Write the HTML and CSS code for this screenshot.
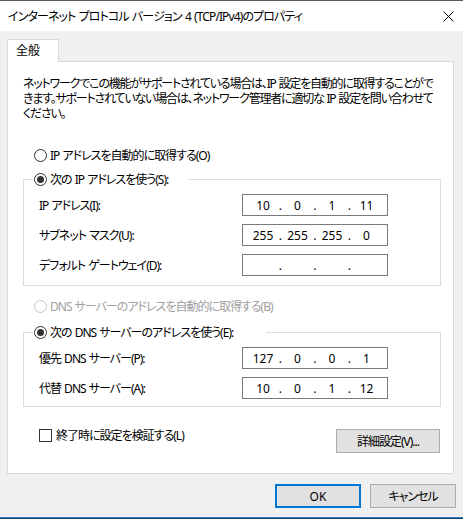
FILE: index.html
```html
<!DOCTYPE html>
<html lang="ja">
<head>
<meta charset="utf-8">
<title>TCP/IPv4 プロパティ</title>
<link rel="stylesheet" href="styles.css">
</head>
<body>
<div class="window">
  <div class="titlebar">
    <span class="title">インターネット プロトコル バージョン 4 (TCP/IPv4)のプロパティ</span>
    <svg class="close" width="11" height="11" viewBox="0 0 11 11"><path d="M0.5 0.5 L10.5 10.5 M10.5 0.5 L0.5 10.5" stroke="#000" stroke-width="1" fill="none"/></svg>
  </div>
  <div class="client">
    <div class="tabs"><div class="tab">全般</div></div>
    <div class="panel">
      <p class="desc">ネットワークでこの機能がサポートされている場合は、IP 設定を自動的に取得することがで<br>きます。サポートされていない場合は、ネットワーク管理者に適切な IP 設定を問い合わせて<br>ください。</p>

      <div class="radio-row first">
        <svg class="radio" width="13" height="13" viewBox="0 0 13 13"><circle cx="6.5" cy="6.5" r="6" fill="#fff" stroke="#333"/></svg>
        <span>IP アドレスを自動的に取得する(O)</span>
      </div>

      <fieldset class="group ip-group">
        <legend class="radio-row legend-ip">
          <svg class="radio" width="13" height="13" viewBox="0 0 13 13"><circle cx="6.5" cy="6.5" r="6" fill="#fff" stroke="#333"/><circle cx="6.5" cy="6.5" r="3.5" fill="#333"/></svg>
          <span>次の IP アドレスを使う(S):</span>
        </legend>
        <div class="field-row">
          <span class="field-label">IP アドレス(I):</span>
          <div class="ipbox"><span class="oct">10</span><span class="dot">.</span><span class="oct">0</span><span class="dot">.</span><span class="oct">1</span><span class="dot">.</span><span class="oct">11</span></div>
        </div>
        <div class="field-row">
          <span class="field-label">サブネット マスク(U):</span>
          <div class="ipbox"><span class="oct">255</span><span class="dot">.</span><span class="oct">255</span><span class="dot">.</span><span class="oct">255</span><span class="dot">.</span><span class="oct">0</span></div>
        </div>
        <div class="field-row">
          <span class="field-label">デフォルト ゲートウェイ(D):</span>
          <div class="ipbox"><span class="oct"></span><span class="dot">.</span><span class="oct"></span><span class="dot">.</span><span class="oct"></span><span class="dot">.</span><span class="oct"></span></div>
        </div>
      </fieldset>

      <div class="radio-row disabled dns-auto">
        <svg class="radio" width="13" height="13" viewBox="0 0 13 13"><circle cx="6.5" cy="6.5" r="6" fill="#fff" stroke="#c4c4c4"/></svg>
        <span>DNS サーバーのアドレスを自動的に取得する(B)</span>
      </div>

      <fieldset class="group dns-group">
        <legend class="radio-row legend-dns">
          <svg class="radio" width="13" height="13" viewBox="0 0 13 13"><circle cx="6.5" cy="6.5" r="6" fill="#fff" stroke="#333"/><circle cx="6.5" cy="6.5" r="3.5" fill="#333"/></svg>
          <span>次の DNS サーバーのアドレスを使う(E):</span>
        </legend>
        <div class="field-row">
          <span class="field-label">優先 DNS サーバー(P):</span>
          <div class="ipbox"><span class="oct">127</span><span class="dot">.</span><span class="oct">0</span><span class="dot">.</span><span class="oct">0</span><span class="dot">.</span><span class="oct">1</span></div>
        </div>
        <div class="field-row">
          <span class="field-label">代替 DNS サーバー(A):</span>
          <div class="ipbox"><span class="oct">10</span><span class="dot">.</span><span class="oct">0</span><span class="dot">.</span><span class="oct">1</span><span class="dot">.</span><span class="oct">12</span></div>
        </div>
      </fieldset>

      <div class="footer-row">
        <div class="check-row">
          <span class="checkbox"></span>
          <span>終了時に設定を検証する(L)</span>
        </div>
        <div class="btn detail">詳細設定(V)...</div>
      </div>
    </div>
    <div class="dialog-buttons">
      <div class="btn ok">OK</div>
      <div class="btn">キャンセル</div>
    </div>
  </div>
  <div class="bottom-edge"></div>
</div>
</body>
</html>
```

FILE: styles.css
```css
* { box-sizing: border-box; }
html, body { margin: 0; padding: 0; }
body {
  width: 463px;
  height: 519px;
  overflow: hidden;
  background: #f0f0f0;
  font-family: "Noto Sans", "Noto Sans CJK JP", sans-serif;
  font-size: 12px;
  line-height: 15px;
  color: #000;
  font-feature-settings: "palt";
  letter-spacing: -1px;
  word-spacing: 1px;
}
.window {
  height: 519px;
  display: flex;
  flex-direction: column;
  border-top: 1px solid #5a5a5a;
}
.titlebar {
  height: 30px;
  background: #fff;
  display: flex;
  align-items: center;
  justify-content: space-between;
  padding: 0 9px 0 8px;
}
.title { white-space: nowrap; letter-spacing: -0.9px; }
.close { display: block; }
.client {
  flex: 1;
  padding: 8px 7px 0 7px;
  display: flex;
  flex-direction: column;
}
.tabs { display: flex; }
.tab {
  position: relative;
  z-index: 1;
  width: 52px;
  height: 23px;
  margin-bottom: -1px;
  background: #fff;
  border: 1px solid #d9d9d9;
  border-bottom: none;
  padding: 3px 0 0 8px;
  letter-spacing: 0;
}
.panel {
  width: 447px;
  height: 413px;
  background: #fff;
  border: 1px solid #d9d9d9;
  padding: 14px 12px 0 15px;
  display: flex;
  flex-direction: column;
}
.desc {
  margin: 0;
  white-space: nowrap;
  letter-spacing: -1.2px;
}
.radio-row {
  display: flex;
  align-items: center;
  gap: 3px;
  white-space: nowrap;
}
.radio { display: block; flex: none; }
.radio-row.first { margin: 27px 0 0 11px; }
.radio-row.disabled { color: #a0a0a0; }
.dns-auto { margin: 13px 0 0 11px; }
.group {
  margin: 0;
  border: 1px solid #dcdcdc;
  padding: 7px 0 9px 0;
  min-width: 0;
  display: flex;
  flex-direction: column;
  gap: 8px;
}
.ip-group { margin-top: 9px; }
.dns-group { margin-top: 11px; padding-bottom: 7px; }
.group legend {
  margin-left: 9px;
  padding: 0 20px 0 1px;
  height: 15px;
}
.group legend.legend-dns { padding-right: 33px; }
.field-row {
  display: flex;
  align-items: center;
  justify-content: space-between;
  height: 22px;
  padding: 0 52px 0 15px;
}
.field-label { white-space: nowrap; }
.ipbox {
  width: 146px;
  height: 22px;
  border: 1px solid #7a7a7a;
  display: flex;
  align-items: center;
  padding-left: 6px;
  font-feature-settings: normal;
  letter-spacing: 0;
}
.oct { width: 28px; text-align: center; }
.dot { width: 6.5px; text-align: center; }
.footer-row {
  margin-top: 22px;
  display: flex;
  justify-content: space-between;
  align-items: flex-start;
  padding-left: 16px;
  padding-right: 1px;
}
.check-row {
  display: flex;
  align-items: center;
  gap: 4px;
  height: 13px;
  white-space: nowrap;
}
.checkbox {
  width: 13px;
  height: 13px;
  border: 1px solid #333;
  background: #fff;
  flex: none;
}
.btn {
  height: 24px;
  background: #e1e1e1;
  border: 1px solid #adadad;
  display: flex;
  align-items: center;
  justify-content: center;
  white-space: nowrap;
}
.detail { width: 104px; }
.dialog-buttons {
  display: flex;
  justify-content: flex-end;
  gap: 9px;
  margin-top: 10px;
}
.dialog-buttons .btn { width: 86px; }
.btn.ok { border: 2px solid #0078d7; letter-spacing: 0; }
.bottom-edge {
  height: 2px;
  margin-top: auto;
  background: linear-gradient(#2f7fcf 0 1px, #163c63 1px 2px);
}
```
